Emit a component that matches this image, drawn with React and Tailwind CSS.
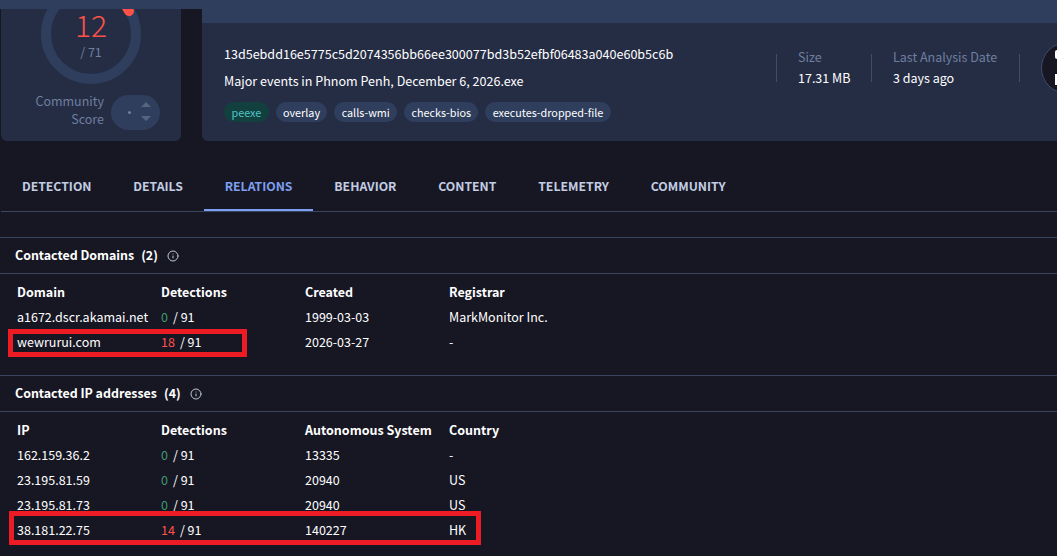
import { Info } from 'lucide-react';

const TABS = ['Detection', 'Details', 'Relations', 'Behavior', 'Content', 'Telemetry', 'Community'];
const TAGS = ['overlay', 'calls-wmi', 'checks-bios', 'executes-dropped-file'];

const DOMAINS = [
    { name: 'a1672.dscr.akamai.net', hits: 0, third: '1999-03-03', fourth: 'MarkMonitor Inc.' },
    { name: 'wewrurui.com', hits: 18, third: '2026-03-27', fourth: '-' },
];
const IPS = [
    { name: '162.159.36.2', hits: 0, third: '13335', fourth: '-' },
    { name: '23.195.81.59', hits: 0, third: '20940', fourth: 'US' },
    { name: '23.195.81.73', hits: 0, third: '20940', fourth: 'US' },
    { name: '38.181.22.75', hits: 14, third: '140227', fourth: 'HK' },
];

function ScoreCard() {
    return (
        <div className="w-[180px] h-[132px] ml-px bg-[#252d45] rounded-b-md overflow-hidden">
            <div className="relative w-[100px] h-[100px] ml-[40px] -mt-[25px]">
                <svg width="100" height="100" viewBox="0 0 100 100">
                    <circle cx="50" cy="50" r="45" fill="none" stroke="#2f3e5c" strokeWidth="10" />
                    <path d="M 80 16 A 45 45 0 0 1 88 27" fill="none" stroke="#ff5148" strokeWidth="10" strokeLinecap="round" />
                </svg>
                <div className="absolute inset-0 flex flex-col items-center pt-[28px]">
                    <span className="text-[30px] leading-[24px] font-light text-[#ff5148]">12</span>
                    <span className="mt-[8px] text-[12.5px] leading-[16px] text-[#6f7f9f]">/ 71</span>
                </div>
            </div>
            <div className="flex items-center mt-[8px]">
                <div className="w-[103px] pb-[4px] text-right text-[12.5px] leading-[18px] text-[#6f7f9f]">
                    Community<br />Score
                </div>
                <div className="ml-[7px] w-[49px] h-[35px] rounded-full bg-[#2f3e5c] flex items-center">
                    <span className="ml-[17px] w-[3px] h-[3px] rounded-full bg-[#6f7f9f]" />
                    <svg className="ml-[9px]" width="12" height="20" viewBox="0 0 12 20">
                        <path d="M6 0 L11 5 L1 5 Z M6 19 L11 14 L1 14 Z" fill="#56647f" />
                    </svg>
                </div>
            </div>
        </div>
    );
}

function Stat({ label, value, className }) {
    return (
        <div className={className}>
            <div className="text-[12.5px] leading-[21px] text-[#6f7f9f] whitespace-nowrap">{label}</div>
            <div className="text-[12.5px] leading-[21px] text-white">{value}</div>
        </div>
    );
}

function FileCard() {
    return (
        <div className="flex-1 ml-[21px] h-[132px] bg-[#252d45] rounded-bl-md overflow-hidden">
            <div className="h-[14px] bg-[#2f3e5c]" />
            <div className="flex">
                <div className="w-[574px] pl-[22px] pt-[21px] shrink-0">
                    <div className="text-[12.55px] leading-[20px] text-white">13d5ebdd16e5775c5d2074356bb66ee300077bd3b52efbf06483a040e60b5c6b</div>
                    <div className="mt-[7px] text-[12.55px] leading-[20px] text-white">Major events in Phnom Penh, December 6, 2026.exe</div>
                    <div className="mt-[11px] flex gap-[7px]">
                        <span className="h-[20px] px-[7.5px] rounded-full bg-[#12403f] text-[#4fc3c7] text-[10.8px] leading-[20px]">peexe</span>
                        {TAGS.map((t) => (
                            <span key={t} className="h-[20px] px-[7.3px] rounded-full bg-[#2f3e5c] text-white text-[10.8px] leading-[20px]">{t}</span>
                        ))}
                    </div>
                </div>
                <div className="flex items-center h-[90px] shrink-0">
                    <div className="w-px h-[28px] bg-[#3f4d6b]" />
                    <Stat className="w-[94px] pl-[21px] -mt-[2px]" label="Size" value="17.31 MB" />
                    <div className="w-px h-[28px] bg-[#3f4d6b]" />
                    <Stat className="w-[147px] pl-[21px] -mt-[2px]" label="Last Analysis Date" value="3 days ago" />
                    <div className="w-px h-[28px] bg-[#3f4d6b]" />
                    <div className="relative ml-[21px] w-[52px] h-[52px] shrink-0 rounded-full bg-[#171724] border border-[#3f4d6b]">
                        <span className="absolute left-[13px] top-[7px] w-[2px] h-[9px] rounded-l-sm bg-white" />
                        <span className="absolute left-[13px] top-[31px] w-[2px] h-[11px] bg-white" />
                    </div>
                </div>
            </div>
        </div>
    );
}

function Detections({ hits }) {
    return (
        <span>
            <span className={hits > 0 ? 'text-[#ff5148]' : 'text-[#3f9a70]'}>{hits}</span>
            <span className="ml-[5px]">/ 91</span>
        </span>
    );
}

function Section({ title, count, heads, rows, box }) {
    return (
        <div className="border-t border-[#3a4560]">
            <div className="h-[36px] pl-[15px] flex items-center text-[12.4px] font-bold text-white border-b border-[#3a4560]">
                {title}<span className="ml-[7px]">({count})</span>
                <Info size={12} className="ml-[9px] text-[#c0c6d4]" />
            </div>
            <div className="pt-[6px] pb-[20px] pl-[17px]">
                <div className="grid grid-cols-[144px_144px_144px_1fr] h-[25px] items-center text-[12.5px] font-bold text-white">
                    {heads.map((h) => <div key={h}>{h}</div>)}
                </div>
                {rows.map((r, i) => (
                    <div key={r.name} className="relative grid grid-cols-[144px_144px_144px_1fr] h-[25px] items-center text-[12.5px] text-white">
                        <div>{r.name}</div>
                        <div><Detections hits={r.hits} /></div>
                        <div>{r.third}</div>
                        <div>{r.fourth}</div>
                        {i === box.row && <div className={box.className} />}
                    </div>
                ))}
            </div>
        </div>
    );
}

export default function App() {
    return (
        <div className="w-[1057px] h-[556px] overflow-hidden bg-[#171724] font-['Noto_Sans_CJK_JP','Noto_Sans',sans-serif]">
            <div className="h-[9px] bg-[#2f3e5c]" />
            <div className="flex">
                <ScoreCard />
                <FileCard />
            </div>

            <div className="mt-[29px] ml-px h-[42px] flex border-b border-[#3a4560]">
                {TABS.map((t) => (
                    <div key={t} className={`h-[41px] px-[20.9px] pb-[6px] flex items-center text-[12.25px] font-bold uppercase border-b-2 ${t === 'Relations' ? 'text-[#7d9ff0] border-[#7d9ff0]' : 'text-[#c3cde3] border-transparent'}`}>
                        {t}
                    </div>
                ))}
            </div>

            <div className="mt-[25px]">
                <Section
                    title="Contacted Domains"
                    count={2}
                    heads={['Domain', 'Detections', 'Created', 'Registrar']}
                    rows={DOMAINS}
                    box={{ row: 1, className: 'absolute -left-[9px] -top-px w-[239px] h-[28px] border-[5px] border-[#ed1c24]' }}
                />
                <Section
                    title="Contacted IP addresses"
                    count={4}
                    heads={['IP', 'Detections', 'Autonomous System', 'Country']}
                    rows={IPS}
                    box={{ row: 3, className: 'absolute -left-[8px] -top-[7px] w-[472px] h-[34px] border-[5px] border-[#ed1c24]' }}
                />
            </div>
        </div>
    );
}
